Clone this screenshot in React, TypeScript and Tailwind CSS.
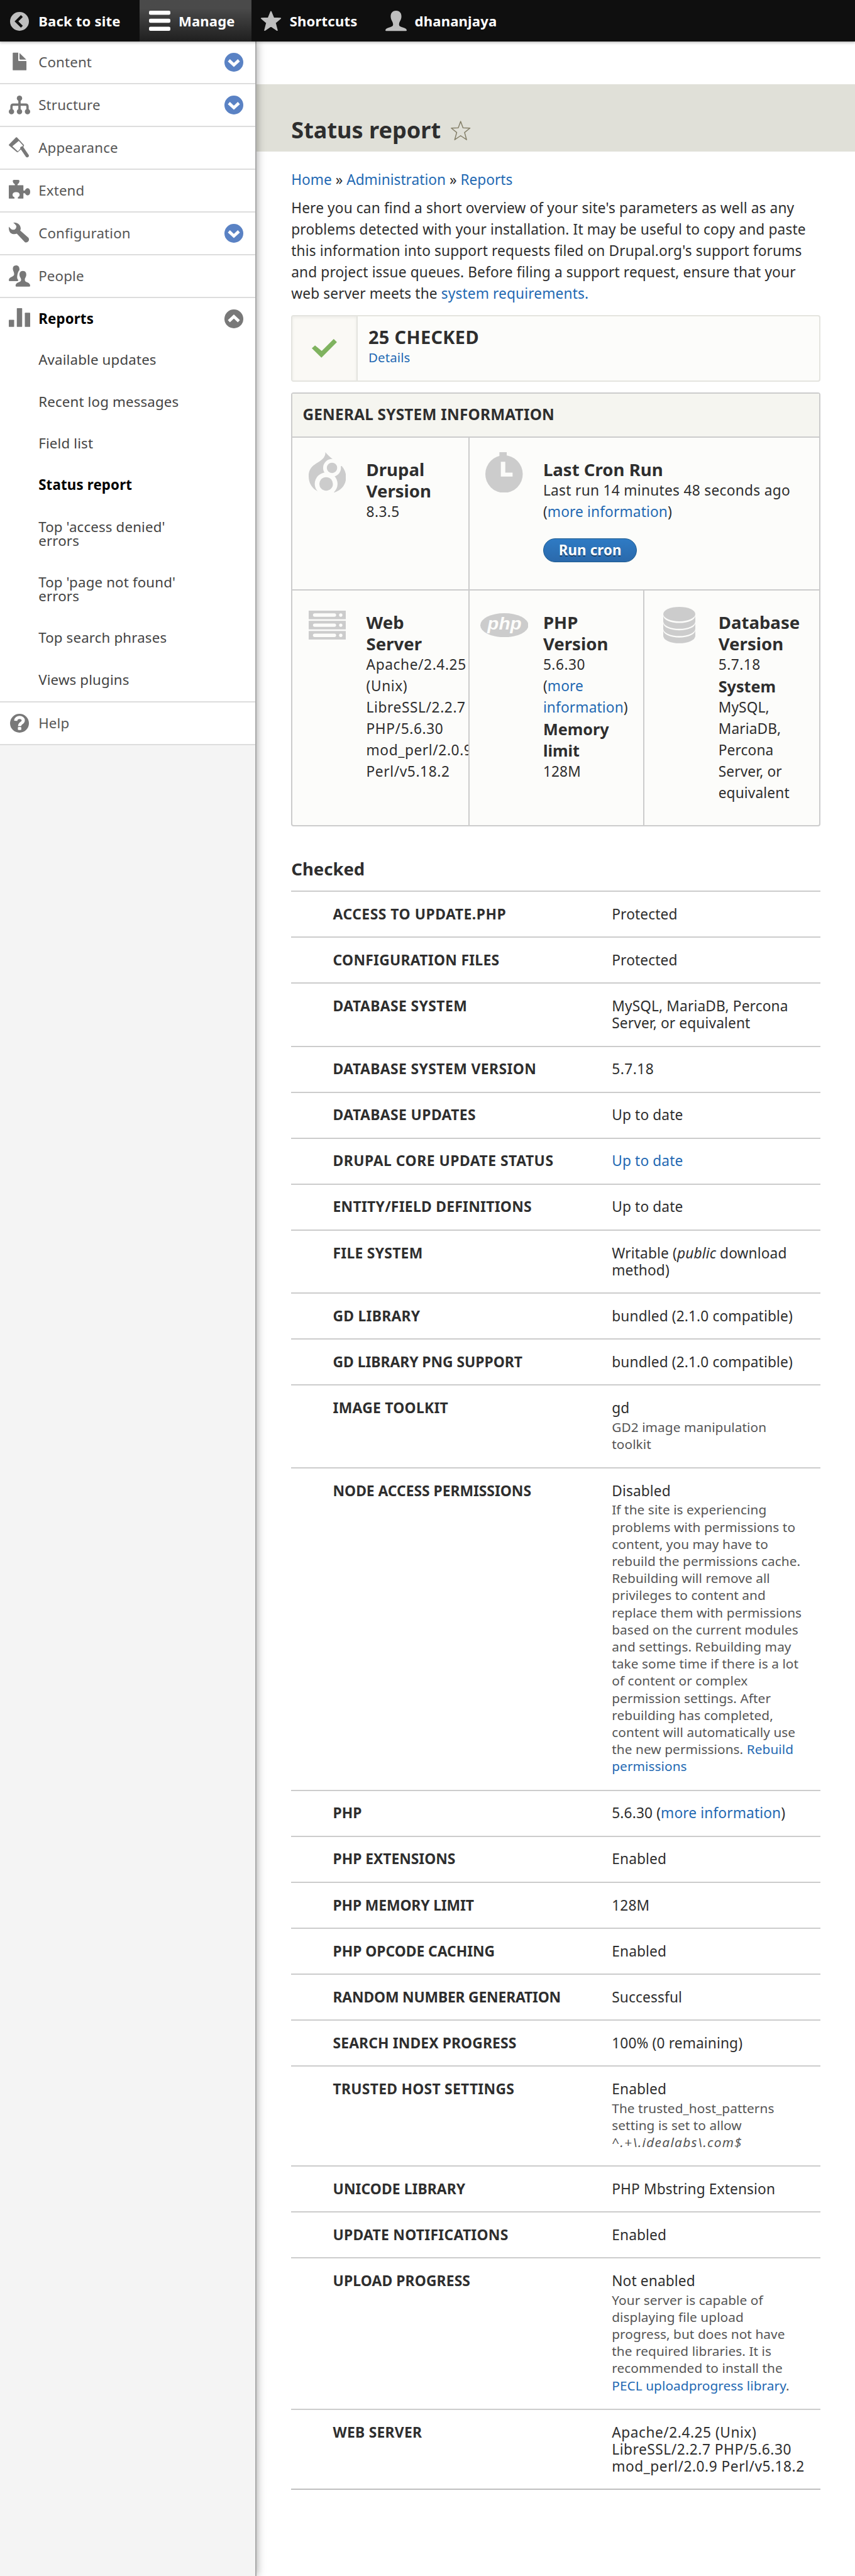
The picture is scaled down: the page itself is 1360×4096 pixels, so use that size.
import React, { type ReactNode } from "react";

type IconProps = { children: ReactNode; className?: string };

/** Square glyph used by the toolbar and the administration menu. */
function Glyph({ children, className = "text-[#787878]" }: IconProps) {
  return (
    <svg viewBox="0 0 120 120" className={`size-40 shrink-0 ${className}`} fill="currentColor" aria-hidden="true">
      {children}
    </svg>
  );
}

const BackIcon = () => (
  <Glyph className="text-[#bebebe]">
    <circle cx="60" cy="60" r="53" />
    <path d="M68 35 L43 60 L68 85" fill="none" stroke="#0f0f0f" strokeWidth="15" strokeLinecap="square" />
  </Glyph>
);

const MenuIcon = () => (
  <Glyph className="text-white">
    <rect x="0" y="0" width="120" height="23" rx="8" />
    <rect x="0" y="45" width="120" height="23" rx="8" />
    <rect x="0" y="90" width="120" height="23" rx="8" />
  </Glyph>
);

const StarIcon = () => (
  <Glyph className="text-[#bebebe]">
    <path
      d="M60 5 L75 41 L114 43 L84 68 L95 110 L60 87 L25 110 L36 68 L6 43 L45 41 Z"
      stroke="currentColor"
      strokeWidth="6"
      strokeLinejoin="round"
    />
  </Glyph>
);

const UserIcon = () => (
  <Glyph className="text-[#bebebe]">
    <path d="M60 0 C38 0 29 16 30 34 C31 54 42 60 43 74 C44 84 41 88 26 93 C10 98 1 102 0 110 Q0 114 5 114 H115 Q120 114 120 110 C119 102 110 98 94 93 C79 88 76 84 77 74 C78 60 89 54 90 34 C91 16 82 0 60 0 Z" />
  </Glyph>
);

const FileIcon = () => (
  <Glyph>
    <path d="M25 6 H53 V49 Q53 53 57 53 H96 Q99 53 99 56 V102 Q99 105 96 105 H25 Q22 105 22 102 V9 Q22 6 25 6 Z" />
    <path d="M60 8 L98 45 H64 Q60 45 60 41 Z" />
  </Glyph>
);

const StructureIcon = () => (
  <Glyph>
    <circle cx="60" cy="22" r="15" />
    <circle cx="15" cy="97" r="15" />
    <circle cx="60" cy="97" r="15" />
    <circle cx="105" cy="97" r="15" />
    <path d="M60 22 V97 M15 97 V68 Q15 58 25 58 H95 Q105 58 105 68 V97" fill="none" stroke="currentColor" strokeWidth="13" />
  </Glyph>
);

const BrushIcon = () => (
  <Glyph>
    <path d="M40 2 Q43 -1 46 2 L86 45 L82 56 L50 86 L44 83 L1 47 Q-1 44 2 41 Z" />
    <path d="M56 21 L80 48 L51 80 L20 51 Z" fill="#fff" />
    <path d="M74 62 L103 104" fill="none" stroke="currentColor" strokeWidth="19" strokeLinecap="round" />
  </Glyph>
);

const PuzzleIcon = () => (
  <Glyph>
    <path d="M3 30 H34 V25 Q22 16 22 7 Q22 0 29 0 H53 Q60 0 60 7 Q60 16 49 25 V30 H79 Q82 30 82 33 V60 H90 Q96 47 105 47 C115 47 120 56 120 67 C120 78 115 87 105 87 Q96 86 90 75 H82 V102 Q82 105 79 105 H51 V98 Q61 94 61 84 C61 74 53 69 41 69 C30 69 21 74 21 84 Q21 94 32 98 V105 H3 Q0 105 0 102 V33 Q0 30 3 30 Z" />
  </Glyph>
);

const WrenchIcon = () => (
  <Glyph>
    <path d="M25 0 C50 -2 66 13 67 33 Q67 38 64 44 L110 85 Q116 93 111 103 Q101 115 90 109 L45 62 C34 67 20 65 10 58 Q-1 48 0 23 L14 37 Q27 43 35 37 Q44 29 42 18 Q36 8 25 0 Z" />
  </Glyph>
);

const PeopleIcon = () => (
  <Glyph>
    <path d="M41 0 C27 0 22 10 23 21 C24 33 31 37 30 51 C29 59 20 62 12 66 C4 70 0 76 0 84 Q0 88 4 88 H50 L54 82 Q46 78 47 62 Q50 36 60 26 C60 8 54 0 41 0 Z" />
    <path d="M79 31 C65 31 59 41 60 54 C61 67 69 70 69 80 C69 91 60 92 51 96 C42 100 38 106 38 115 Q38 119 42 119 H116 Q120 119 120 115 C120 106 115 100 107 96 C98 92 90 91 90 80 C90 70 97 67 98 54 C99 41 93 31 79 31 Z" />
  </Glyph>
);

const ChartIcon = () => (
  <Glyph>
    <rect x="0" y="65" width="30" height="40" rx="3" />
    <rect x="45" y="0" width="30" height="105" rx="3" />
    <rect x="90" y="26" width="30" height="79" rx="3" />
  </Glyph>
);

const HelpIcon = () => (
  <Glyph>
    <circle cx="60" cy="60" r="53" />
    <path d="M39 46 C40 21 82 22 81 45 C80 61 60 58 61 76" fill="none" stroke="#fff" strokeWidth="18" />
    <rect x="51" y="81" width="19" height="17" rx="4" fill="#fff" />
  </Glyph>
);

function Toggle({ open = false }: { open?: boolean }) {
  return (
    <Glyph className={open ? "text-[#787878]" : "text-[#5a82c4]"}>
      <circle cx="60" cy="60" r="53" />
      <path
        d={open ? "M32 73 L60 47 L88 73" : "M32 49 L60 75 L88 49"}
        fill="none"
        stroke="#fff"
        strokeWidth="17"
        strokeLinejoin="miter"
      />
    </Glyph>
  );
}

function ToolbarTab({ icon, label, className }: { icon: ReactNode; label: string; className: string }) {
  return (
    <a className={`flex h-full items-center ${className}`}>
      <span className="flex pt-3">{icon}</span>
      <span className="ml-15 whitespace-nowrap">{label}</span>
    </a>
  );
}

function Toolbar() {
  return (
    <header className="relative z-20 flex h-78 shrink-0 bg-[#0f0f0f] text-[22.1px] font-bold tracking-[0.17px] text-white shadow-[0_0_5px_1px_rgba(0,0,0,0.35)]">
      <ToolbarTab icon={<BackIcon />} label="Back to site" className="w-261 pl-17" />
      <ToolbarTab
        icon={<MenuIcon />}
        label="Manage"
        className="w-210 bg-linear-to-b from-[#4a4a4a] from-20% to-[#1f1f1f] pl-18"
      />
      <ToolbarTab icon={<StarIcon />} label="Shortcuts" className="w-234 pl-16" />
      <ToolbarTab icon={<UserIcon />} label="dhananjaya" className="pl-16" />
    </header>
  );
}

type MenuEntry = { label: string; icon: ReactNode; toggle?: boolean };

const MENU: MenuEntry[] = [
  { label: "Content", icon: <FileIcon />, toggle: true },
  { label: "Structure", icon: <StructureIcon />, toggle: true },
  { label: "Appearance", icon: <BrushIcon /> },
  { label: "Extend", icon: <PuzzleIcon /> },
  { label: "Configuration", icon: <WrenchIcon />, toggle: true },
  { label: "People", icon: <PeopleIcon /> },
];

const REPORTS: { lines: string[]; active?: boolean }[] = [
  { lines: ["Available updates"] },
  { lines: ["Recent log messages"] },
  { lines: ["Field list"] },
  { lines: ["Status report"], active: true },
  { lines: ["Top 'access denied'", "errors"] },
  { lines: ["Top 'page not found'", "errors"] },
  { lines: ["Top search phrases"] },
  { lines: ["Views plugins"] },
];

function Sidebar() {
  return (
    <aside className="relative z-10 flex w-480 shrink-0 flex-col border-r-2 border-[#aaa] bg-[#f4f4f4] text-[22.3px] tracking-[0.15px] text-[#565656] shadow-[0_0_13px_rgba(0,0,0,0.4)]">
      <ul className="bg-white">
        {MENU.map((item) => (
          <li key={item.label} className="flex h-80 items-center border-b-2 border-[#ddd] pr-20 pl-17">
            {item.icon}
            <span className="-mt-1 ml-15 flex-1">{item.label}</span>
            {item.toggle && <Toggle />}
          </li>
        ))}
        <li className="border-b-2 border-[#ddd]">
          <div className="flex h-78 items-center pr-20 pl-17 font-bold text-black">
            <ChartIcon />
            <span className="-mt-2 ml-15 flex-1">Reports</span>
            <Toggle open />
          </div>
          <ul className="h-676 pl-72 text-[#444]">
            {REPORTS.map((item) => (
              <li
                key={item.lines[0]}
                className={`pt-24.5 pb-27.5 leading-26 whitespace-nowrap ${item.active ? "font-bold text-black" : ""}`}
              >
                {item.lines.map((line) => (
                  <span key={line} className="block">
                    {line}
                  </span>
                ))}
              </li>
            ))}
          </ul>
        </li>
        <li className="flex h-80 items-center border-b-2 border-[#ddd] pl-17">
          <HelpIcon />
          <span className="-mt-2 ml-15">Help</span>
        </li>
      </ul>
    </aside>
  );
}

const A = ({ children }: { children: ReactNode }) => <a className="text-[#2369b3]">{children}</a>;

function DrupalIcon() {
  return (
    <svg viewBox="0 0 210 228" className="h-76 w-70" fill="#ccc" aria-hidden="true">
      <path d="M94 0 C104 14 122 30 137 41 C160 54 210 84 210 140 C210 185 180 218 138 228 L48 218 C15 200 0 170 0 134 C0 50 94 66 94 0 Z" />
      <g fill="#fcfcfa">
        <circle cx="131" cy="88" r="50" />
        <circle cx="98" cy="178" r="64" />
        <path d="M137 41 L152 28 L196 70 L180 80 L160 90 Z" />
      </g>
      <circle cx="131" cy="88" r="29" />
      <circle cx="98" cy="178" r="38" />
    </svg>
  );
}

function ClockIcon() {
  return (
    <svg viewBox="0 0 210 228" className="h-76 w-70" fill="#ccc" aria-hidden="true">
      <circle cx="105" cy="123" r="105" />
      <rect x="79" y="0" width="41" height="30" />
      <path d="M87 54 H112 V115 H153 V137 H87 Z" fill="#fcfcfa" />
    </svg>
  );
}

function ServerIcon() {
  return (
    <svg viewBox="0 0 210 162" className="h-54 w-70" fill="#ccc" aria-hidden="true">
      {[0, 57, 114].map((y) => (
        <g key={y} transform={`translate(0 ${y})`}>
          <rect width="210" height="48" />
          <rect x="24" y="15" width="130" height="19" rx="9.5" fill="#fcfcfa" />
          <circle cx="180" cy="24.5" r="9.5" fill="#fcfcfa" />
        </g>
      ))}
    </svg>
  );
}

function PhpIcon() {
  return (
    <svg viewBox="0 0 270 135" className="h-45 w-90" fill="#ccc" aria-hidden="true">
      <ellipse cx="135" cy="67.5" rx="135" ry="67.5" />
      <text
        x="40"
        y="91"
        textLength="192"
        lengthAdjust="spacingAndGlyphs"
        fill="#fcfcfa"
        fontSize="96"
        fontWeight="700"
        fontStyle="italic"
        fontFamily="Liberation Sans, sans-serif"
      >
        php
      </text>
    </svg>
  );
}

function DatabaseIcon() {
  return (
    <svg viewBox="0 0 60 68" className="h-68 w-60" fill="#ccc" aria-hidden="true">
      <ellipse cx="30" cy="13.5" rx="30" ry="13.5" />
      <path d="M0 16.5 A30 13.5 0 0 0 60 16.5 V27.5 A30 13.5 0 0 1 0 27.5 Z" />
      <path d="M0 30.3 A30 13.5 0 0 0 60 30.3 V41 A30 13.5 0 0 1 0 41 Z" />
      <path d="M0 43.8 A30 13.5 0 0 0 60 43.8 V54.5 A30 13.5 0 0 1 0 54.5 Z" />
    </svg>
  );
}

function InfoCell({ icon, children, className }: { icon: ReactNode; children: ReactNode; className: string }) {
  return (
    <div className={`flex overflow-hidden ${className}`}>
      <div className="flex size-130 shrink-0 items-center justify-center">{icon}</div>
      <div className="ml-8 pt-39 leading-40 whitespace-nowrap">{children}</div>
    </div>
  );
}

const H3 = ({ children }: { children: ReactNode }) => <h3 className="text-[27.6px] font-bold tracking-normal">{children}</h3>;
const H4 = ({ children }: { children: ReactNode }) => <h4 className="text-[25.2px] font-bold tracking-normal">{children}</h4>;

function SystemInformation() {
  return (
    <section className="mt-20 h-812 w-990 rounded-[4px] border-2 border-[#ccc] bg-[#fcfcfa]">
      <h2 className="flex h-82 items-center border-b-2 border-[#ccc] bg-[#f5f5f0] pl-19 text-[24.3px] font-bold tracking-[0.25px]">
        GENERAL SYSTEM INFORMATION
      </h2>
      <div className="flex h-286 border-b-2 border-[#ccc]">
        <InfoCell icon={<DrupalIcon />} className="w-331 border-r-2 border-[#ccc]">
          <H3>
            Drupal
            <br />
            Version
          </H3>
          <p className="tracking-[0.4px]">8.3.5</p>
        </InfoCell>
        <InfoCell icon={<ClockIcon />} className="flex-1">
          <H3>Last Cron Run</H3>
          <p className="tracking-[0.3px]">Last run 14 minutes 48 seconds ago</p>
          <p>
            (<A>more information</A>)
          </p>
          <button className="mt-30 flex h-44 w-176 items-center justify-center rounded-full border border-[#1e5c90] bg-linear-to-b from-[#2f7bc4] to-[#2a69ab] text-[22.3px] font-bold text-white [text-shadow:0_2px_0_rgba(0,0,0,0.45)]">
            Run cron
          </button>
        </InfoCell>
      </div>
      <div className="flex h-440">
        <InfoCell icon={<ServerIcon />} className="w-331 border-r-2 border-[#ccc]">
          <H3>
            Web
            <br />
            Server
          </H3>
          <p className="tracking-[0.6px]">
            Apache/2.4.25
            <br />
            (Unix)
            <br />
            LibreSSL/2.2.7
            <br />
            PHP/5.6.30
            <br />
            mod_perl/2.0.9
            <br />
            Perl/v5.18.2
          </p>
        </InfoCell>
        <InfoCell icon={<PhpIcon />} className="w-328 border-r-2 border-[#ccc]">
          <H3>
            PHP
            <br />
            Version
          </H3>
          <p>
            <span className="tracking-[0.5px]">5.6.30</span>
            <br />(<A>more</A>
            <br />
            <A>information</A>)
          </p>
          <H4>
            Memory
            <br />
            limit
          </H4>
          <p>128M</p>
        </InfoCell>
        <InfoCell icon={<DatabaseIcon />} className="flex-1">
          <H3>
            Database
            <br />
            Version
          </H3>
          <p className="tracking-[0.5px]">5.7.18</p>
          <H4>System</H4>
          <p>
            MySQL,
            <br />
            MariaDB,
            <br />
            Percona
            <br />
            Server, or
            <br />
            equivalent
          </p>
        </InfoCell>
      </div>
    </section>
  );
}

type Row = { title: string; value: ReactNode; description?: ReactNode; height: string; track?: string };

const lines = (...parts: ReactNode[]) =>
  parts.map((part, i) => (
    <span key={i} className="block">
      {part}
    </span>
  ));

const ROWS: Row[] = [
  { title: "Access to update.php", value: "Protected", height: "h-86", track: "tracking-[0.5px]" },
  { title: "Configuration files", value: "Protected", height: "h-86" },
  { title: "Database system", value: lines("MySQL, MariaDB, Percona", "Server, or equivalent"), height: "h-118", track: "tracking-[0.4px]" },
  {
    title: "Database system version",
    value: <span className="tracking-[0.5px]">5.7.18</span>,
    height: "h-86",
    track: "tracking-[0.4px]",
  },
  { title: "Database updates", value: "Up to date", height: "h-86", track: "tracking-[0.4px]" },
  { title: "Drupal core update status", value: <A>Up to date</A>, height: "h-86", track: "tracking-[0.5px]" },
  { title: "Entity/field definitions", value: "Up to date", height: "h-86" },
  {
    title: "File system",
    value: lines(
      <>
        Writable (<em>public</em> download
      </>,
      "method)",
    ),
    height: "h-118",
  },
  { title: "GD library", value: "bundled (2.1.0 compatible)", height: "h-86" },
  { title: "GD library PNG support", value: "bundled (2.1.0 compatible)", height: "h-86", track: "tracking-[-0.05px]" },
  { title: "Image toolkit", value: "gd", description: lines("GD2 image manipulation", "toolkit"), height: "h-155" },
  {
    title: "Node Access Permissions",
    value: "Disabled",
    description: lines(
      "If the site is experiencing",
      "problems with permissions to",
      "content, you may have to",
      "rebuild the permissions cache.",
      "Rebuilding will remove all",
      "privileges to content and",
      "replace them with permissions",
      "based on the current modules",
      "and settings. Rebuilding may",
      "take some time if there is a lot",
      "of content or complex",
      "permission settings. After",
      "rebuilding has completed,",
      "content will automatically use",
      <>
        the new permissions. <A>Rebuild</A>
      </>,
      <A>permissions</A>,
    ),
    height: "h-603",
    track: "tracking-[-0.05px]",
  },
  {
    title: "PHP",
    value: (
      <>
        5.6.30 (<A>more information</A>)
      </>
    ),
    height: "h-86",
    track: "tracking-[-0.05px]",
  },
  { title: "PHP extensions", value: "Enabled", height: "h-86", track: "tracking-[-0.05px]" },
  { title: "PHP memory limit", value: "128M", height: "h-86", track: "tracking-[-0.15px]" },
  { title: "PHP OPcode caching", value: "Enabled", height: "h-86", track: "tracking-[-0.05px]" },
  { title: "Random number generation", value: "Successful", height: "h-86", track: "tracking-[-0.2px]" },
  { title: "Search index progress", value: "100% (0 remaining)", height: "h-86", track: "tracking-[0.1px]" },
  {
    title: "Trusted Host Settings",
    value: "Enabled",
    description: lines(
      "The trusted_host_patterns",
      "setting is set to allow",
      <em className="tracking-[1.3px]">{"^.+\\.idealabs\\.com$"}</em>,
    ),
    height: "h-187",
  },
  { title: "Unicode library", value: "PHP Mbstring Extension", height: "h-86", track: "tracking-[0.05px]" },
  { title: "Update notifications", value: "Enabled", height: "h-86" },
  {
    title: "Upload progress",
    value: "Not enabled",
    description: lines(
      "Your server is capable of",
      "displaying file upload",
      "progress, but does not have",
      "the required libraries. It is",
      "recommended to install the",
      <>
        <A>PECL uploadprogress library</A>.
      </>,
    ),
    height: "h-283",
    track: "tracking-[0.1px]",
  },
  {
    title: "Web server",
    value: (
      <span className="tracking-[0.53px]">
        {lines("Apache/2.4.25 (Unix)", "LibreSSL/2.2.7 PHP/5.6.30", "mod_perl/2.0.9 Perl/v5.18.2")}
      </span>
    ),
    height: "h-150",
  },
];

function CheckedList() {
  return (
    <section className="mt-60 w-990">
      <h2 className="text-[27.5px] leading-40 font-bold tracking-normal">Checked</h2>
      <dl className="mt-20 border-t-2 border-[#ccc]">
        {ROWS.map((row) => (
          <div
            key={row.title}
            className={`flex overflow-hidden border-b-2 border-[#ccc] pt-25.5 leading-32 whitespace-nowrap last:border-[#bfbfbf] ${row.height}`}
          >
            <dt
              className={`w-600 shrink-0 pl-78 text-[22.9px] font-bold uppercase ${row.track ?? "tracking-[0.25px]"}`}
            >
              {row.title}
            </dt>
            <dd>
              {row.value}
              {row.description && (
                <div className="mt-4 text-[20.8px] tracking-[0.07px] text-[#555]">{row.description}</div>
              )}
            </dd>
          </div>
        ))}
      </dl>
    </section>
  );
}

function StatusSummary() {
  return (
    <div className="mt-20 flex h-124 w-990 overflow-hidden rounded-[4px] border-2 border-[#e4e4df] bg-[#fcfcfa]">
      <div className="flex w-122 items-center justify-center border-r-2 border-[#e4e4df] bg-[#faf9f5] shadow-[inset_0_2px_5px_rgba(0,0,0,0.06)]">
        <svg viewBox="0 0 47 35" className="h-35 w-47" aria-hidden="true">
          <path d="M0 17.3 L6 12 L18.6 22.5 L41 0 L47 6 L18 35 Z" fill="#7fb35f" />
        </svg>
      </div>
      <div className="pt-18.5 pl-20">
        <div className="text-[28.9px] leading-40 font-bold tracking-[0.35px]">25 CHECKED</div>
        <div className="text-[20.5px] leading-36 tracking-[0.1px]">
          <A>Details</A>
        </div>
      </div>
    </div>
  );
}

export default function App() {
  return (
    <div className="flex h-[4096px] w-[1360px] flex-col overflow-hidden bg-white font-['Noto_Sans','Open_Sans',sans-serif] text-[22.7px] tracking-[0.13px] text-[#2e2e2e] [--spacing:0.85px]">
      <Toolbar />
      <div className="flex min-h-0 flex-1">
        <Sidebar />
        <main className="flex-1 pt-80">
          <div className="flex h-126 items-start bg-[#e0e0d8] pt-60 pl-65">
            <h1 className="text-[36.1px] leading-50 font-bold tracking-normal whitespace-nowrap">Status report</h1>
            <svg viewBox="0 0 36 36" className="mt-8 ml-19 size-37" aria-hidden="true">
              <path
                d="M18 1.2 L22.3 13 L35 13.4 L25.2 21.4 L28.8 34.6 L18 27.2 L7.2 34.6 L10.8 21.4 L1 13.4 L13.7 13 Z"
                fill="none"
                stroke="#85806a"
                strokeWidth="1.7"
                strokeLinejoin="round"
              />
            </svg>
          </div>
          <div className="pl-65">
            <nav className="mt-32 leading-40 tracking-normal whitespace-nowrap">
              <A>Home</A> » <A>Administration</A> » <A>Reports</A>
            </nav>
            <p className="mt-13 mb-21 leading-40 whitespace-nowrap">
              Here you can find a short overview of your site's parameters as well as any
              <br />
              problems detected with your installation. It may be useful to copy and paste
              <br />
              this information into support requests filed on Drupal.org's support forums
              <br />
              and project issue queues. Before filing a support request, ensure that your
              <br />
              web server meets the <A>system requirements.</A>
            </p>
            <StatusSummary />
            <SystemInformation />
            <CheckedList />
          </div>
        </main>
      </div>
    </div>
  );
}
